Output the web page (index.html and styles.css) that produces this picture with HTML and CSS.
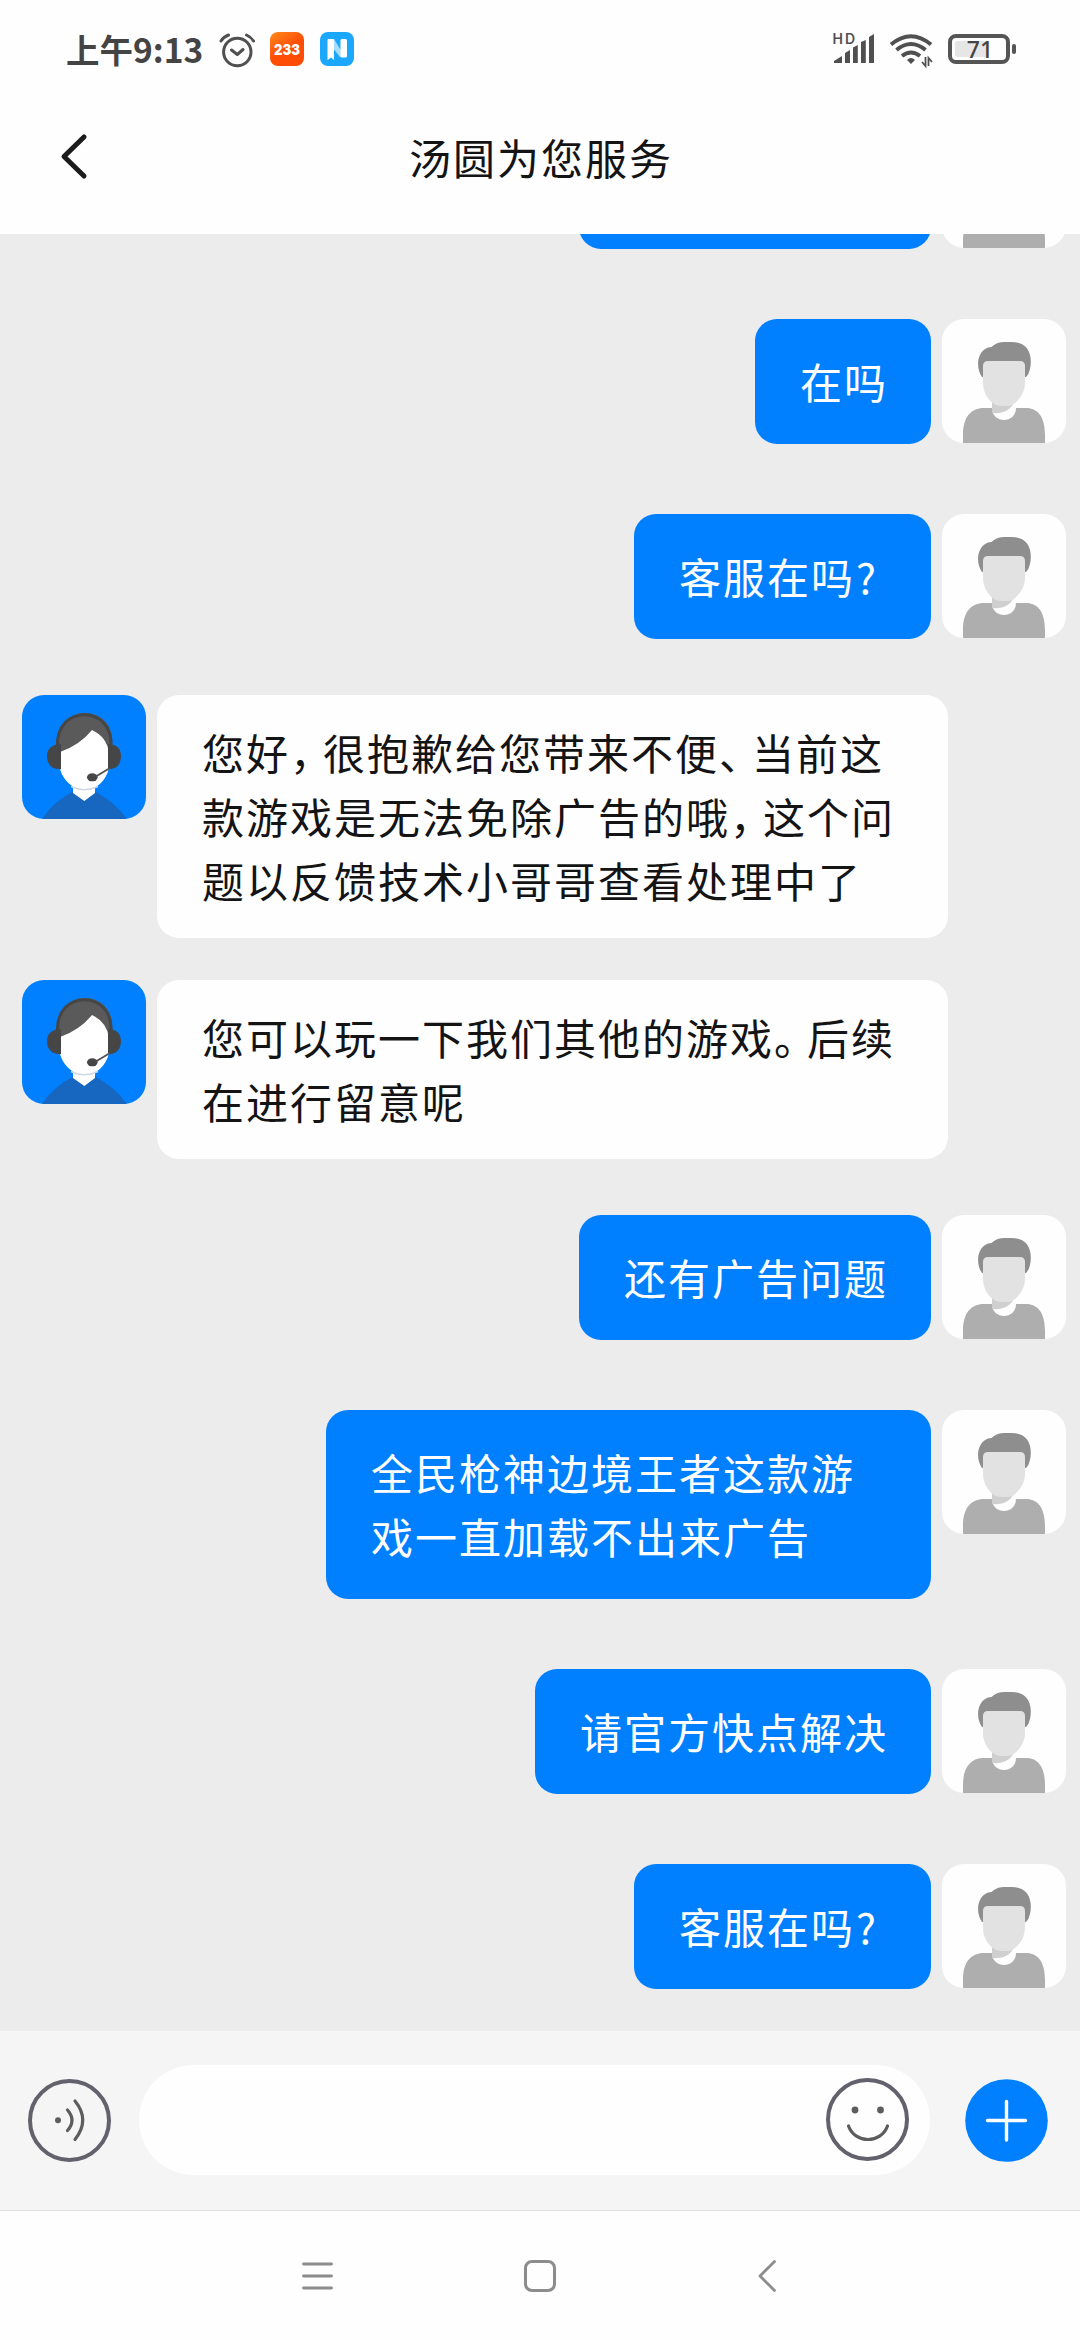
FILE: index.html
```html
<!DOCTYPE html>
<html lang="zh-CN">
<head>
<meta charset="utf-8">
<title>汤圆为您服务</title>
<link rel="stylesheet" href="styles.css">
</head>
<body>
<svg class="defs" width="0" height="0">
  <defs>
    <symbol id="user" viewBox="0 0 124 124">
      <rect width="124" height="124" fill="#fefefe"/>
      <path d="M40 58C34 50 34 33 46 28.500Q50 28.500 52 26Q56 23 62 23H70C86 23 91 36 88 50Q87 55 84 58Z" fill="#8e8e8e"/>
      <path d="M21 124V116C21 98 29 89 42 89H50C50 105 74 105 74 89H84C96 89 103 98 103 116V124Z" fill="#aeaeae"/>
      <path d="M50 83H72C69 91 61 95 50 94Z" fill="#cfcfcf"/>
      <path d="M41 47Q41 42 46 42H78Q83 42 83 47V64C83 76 73 87 65 87H59C50 87 41 76 41 64Z" fill="#e2e2e2"/>
    </symbol>
    <symbol id="agent" viewBox="0 0 124 124">
      <rect width="124" height="124" fill="#0080ff"/>
      <path d="M20 124Q30 108 50 97H74Q94 108 105 124Z" fill="#1767c0"/>
      <path d="M51 88H73V98L62.300 106L51 98Z" fill="#fff"/>
      <path d="M35 60V45C36 10 89 8 90 45V60Z" fill="#5a5a5a"/>
      <path d="M38 57Q58 50 70 35Q85 42 87 58V73C84 86 74 95 62.500 95C50 95 39 82 38 73Z" fill="#fff"/>
      <path d="M49 91.500Q62 98 76 91.500" fill="none" stroke="#d3dae3" stroke-width="1.500"/>
      <path d="M35.500 52C33 9 92 9 89 52" fill="none" stroke="#464646" stroke-width="3"/>
      <path d="M39 49V74C30 75 25 69 25 61S31 49 39 49ZM86 49V74C94 75 99 69 99 61S94 49 86 49Z" fill="#464646"/>
      <path d="M88 73L73 82" stroke="#555" stroke-width="2" fill="none"/>
      <ellipse cx="70.300" cy="82.300" rx="5.300" ry="4" fill="#464646"/>
    </symbol>
  </defs>
</svg>
<div class="screen">
  <header class="status">
    <span class="time">上午9:13</span>
    <svg class="alarm" width="36" height="36" viewBox="219 32 36 36" fill="none" stroke="#505050" stroke-width="3" stroke-linecap="round" stroke-linejoin="round">
      <circle cx="237.300" cy="52" r="13.700"/><path d="M231.500 50L237.300 54.500L243 49.500M221 41Q223.500 37 228.500 35M246.500 35Q251 37 253.500 41"/>
    </svg>
    <svg class="app" width="34" height="34" viewBox="0 0 34 34">
      <defs><linearGradient id="orange" x1="0" y1="0" x2=".6" y2="1"><stop stop-color="#ff8a1c"/><stop offset=".6" stop-color="#ff4d05"/></linearGradient></defs>
      <rect width="34" height="34" rx="8" fill="url(#orange)"/>
      <text class="app-text" x="17" y="22.500" text-anchor="middle" textLength="26" lengthAdjust="spacingAndGlyphs">233</text>
    </svg>
    <svg class="app" width="34" height="34" viewBox="0 0 34 34">
      <rect width="34" height="34" rx="8" fill="#1ba7fb"/>
      <path d="M9 7H14L25 25H20L12 15Z" fill="#a5dcff"/>
      <path d="M8 7H14V28L11 25.500L7.500 28V8Z" fill="#fff"/><rect x="20.500" y="7" width="6.500" height="18.500" rx="1.500" fill="#fff"/>
    </svg>
    <div class="indicators">
      <svg width="44" height="40" viewBox="832 29 44 40" fill="#505050">
        <text class="hd" x="832.500" y="44" textLength="22.500">HD</text>
        <path d="M834 63V61L842 56V63ZM845 63V53L850 50V63ZM853 63V47.500L857.800 45V63ZM861 63V42L865.800 40V63ZM869 63V37L874 34V63Z"/>
      </svg>
      <svg class="wifi" width="44" height="36" viewBox="889 32 44 36" fill="none" stroke="#505050" stroke-width="4">
        <path d="M891 44.500Q911 28 931 44.500M896.500 50Q911 38 925.500 50M902 56Q911 49 920 56"/>
        <path d="M911 64L907 60Q911 56 915 60Z" fill="#505050" stroke="none"/>
        <path d="M925.500 57V66L922 62M928.500 66V58L932 62" stroke-width="1.800"/>
      </svg>
      <svg class="battery" width="70" height="32" viewBox="947 33 70 32">
        <rect x="955" y="41" width="34" height="16" rx="2" fill="#e6e6e6"/>
        <rect x="950" y="36" width="58" height="26" rx="6" fill="none" stroke="#555" stroke-width="4"/>
        <rect x="1012" y="44" width="4" height="10" rx="2" fill="#555"/>
        <text class="level" x="980" y="58" text-anchor="middle">71</text>
      </svg>
    </div>
  </header>
  <div class="titlebar">
    <svg class="back" width="30" height="50" viewBox="0 0 30 50" fill="none" stroke="#1b1b1b" stroke-width="5" stroke-linecap="round" stroke-linejoin="round"><path d="M24 5L4 24.500L24 44"/></svg>
    <h1 class="title">汤圆为您服务</h1>
  </div>
  <main class="chat">
    <div class="msg me"><div class="bubble cut"></div><svg class="avatar"><use href="#user"/></svg></div>
    <div class="msg me"><div class="bubble">在吗</div><svg class="avatar"><use href="#user"/></svg></div>
    <div class="msg me"><div class="bubble">客服在吗<span class="q">?</span></div><svg class="avatar"><use href="#user"/></svg></div>
    <div class="msg"><svg class="avatar"><use href="#agent"/></svg><div class="bubble">您好<span class="p">，</span>很抱歉给您带来不便<span class="p">、</span>当前这<br>款游戏是无法免除广告的哦<span class="p">，</span>这个问<br>题以反馈技术小哥哥查看处理中了</div></div>
    <div class="msg"><svg class="avatar"><use href="#agent"/></svg><div class="bubble">您可以玩一下我们其他的游戏<span class="p">。</span>后续<br>在进行留意呢</div></div>
    <div class="msg me"><div class="bubble">还有广告问题</div><svg class="avatar"><use href="#user"/></svg></div>
    <div class="msg me"><div class="bubble long">全民枪神边境王者这款游<br>戏一直加载不出来广告</div><svg class="avatar"><use href="#user"/></svg></div>
    <div class="msg me"><div class="bubble">请官方快点解决</div><svg class="avatar"><use href="#user"/></svg></div>
    <div class="msg me"><div class="bubble">客服在吗<span class="q">?</span></div><svg class="avatar"><use href="#user"/></svg></div>
  </main>
  <footer class="composer">
    <svg class="round" viewBox="0 0 83 83" fill="none" stroke="#62616c" stroke-width="4">
      <circle cx="41.500" cy="41.500" r="39.500"/><circle cx="30" cy="41.200" r="3" fill="#5d5d5d" stroke="none"/>
      <path d="M39.500 31Q48.500 41.500 39.500 51.500M47 22Q62.500 41 47 60.500" stroke="#5d5d5d" stroke-width="3.200" stroke-linecap="round"/>
    </svg>
    <div class="field">
      <svg class="round" viewBox="0 0 83 83" fill="none" stroke="#62616c" stroke-width="4">
        <circle cx="41.500" cy="41.500" r="39.500"/><circle cx="29" cy="32" r="3.400" fill="#5d5d5d" stroke="none"/><circle cx="54.500" cy="32" r="3.400" fill="#5d5d5d" stroke="none"/>
        <path d="M22.500 48C29 66 55 66 61.500 48" stroke="#5d5d5d" stroke-width="3.200" stroke-linecap="round"/>
      </svg>
    </div>
    <svg class="round plus" viewBox="0 0 83 83"><circle cx="41.500" cy="41.500" r="41.300" fill="#0080ff"/><path d="M41.500 22.500V61M22.500 41.500H60.500" stroke="#fff" stroke-width="3.400" stroke-linecap="round"/></svg>
  </footer>
  <nav class="nav">
    <svg width="32" height="32" viewBox="0 0 32 32" fill="none" stroke="#8c8c8c" stroke-width="2.800" stroke-linecap="round"><path d="M2.500 4H30.500M2.500 16H30.500M2.500 28H30.500"/></svg>
    <svg width="32" height="32" viewBox="0 0 32 32" fill="none" stroke="#8c8c8c" stroke-width="3"><rect x="1.500" y="1.500" width="29" height="29" rx="6.500"/></svg>
    <svg width="32" height="32" viewBox="0 0 32 32" fill="none" stroke="#8c8c8c" stroke-width="2.800" stroke-linecap="round" stroke-linejoin="round"><path d="M27.500 1.500L13 16L27.500 30.500"/></svg>
  </nav>
</div>
</body>
</html>
```
FILE: styles.css
```css
* { box-sizing: border-box; }
body { margin: 0; font-family: "Noto Sans CJK SC", sans-serif; }
svg { display: block; flex: none; }
.defs { position: absolute; }
.screen { width: 1080px; height: 2340px; display: flex; flex-direction: column; overflow: hidden; background: #fefefe; }

.status { height: 98px; padding: 0 63px 0 66px; display: flex; align-items: center; }
.time { width: 153px; font-size: 33.500px; line-height: 48px; font-weight: 700; color: #444; white-space: nowrap; }
.alarm { margin-top: 2px; margin-right: 15px; }
.app { margin-right: 16px; }
.app-text { font: 900 15px Inter, sans-serif; fill: #fff; }
.indicators { margin-left: auto; display: flex; align-items: center; }
.wifi { margin: 2px 14px 0 13px; }
.hd { font: 600 14px Inter, sans-serif; }
.level { font: 500 23px "Noto Sans", sans-serif; fill: #444; }

.titlebar { height: 136px; display: flex; align-items: center; padding: 0 60px 18px; }
.back { margin-right: -30px; }
.title { flex: 1; margin: 0; padding-left: 2px; text-align: center; font-size: 42px; line-height: 64px; font-weight: 400; letter-spacing: 2px; color: #141414; }

.chat { height: 1797px; flex: none; background: #ececec; overflow: hidden; display: flex; flex-direction: column; padding: 0 14px 0 22px; }
.msg { display: flex; gap: 11px; align-items: flex-start; margin: 21px 0; }
.me { justify-content: flex-end; margin: 35px 0; }
.avatar { width: 124px; height: 124px; border-radius: 22px; overflow: hidden; }
.bubble { width: 791px; padding: 25px 43px 26px 45px; border-radius: 22px; background: #fefefe; color: #141414; font-size: 42px; line-height: 64px; letter-spacing: 2px; white-space: nowrap; }
.me .bubble { width: auto; padding: 30px 43px 31px 45px; background: #0080ff; color: #fff; }
.me .long { width: 605px; }
.me .cut { width: 352px; height: 125px; }
.msg:first-child { margin-top: -110px; }
.p { letter-spacing: -9px; }
.q { display: inline-block; width: 33px; padding-left: 1px; }

.composer { height: 180px; flex: none; display: flex; align-items: center; padding: 0 32px 1px 28px; background: #f5f5f5; border-bottom: 1px solid #dedede; }
.round { width: 83px; height: 83px; }
.field { width: 791px; height: 110px; margin: 0 35px 0 28px; padding: 0 21px 1px; border-radius: 55px; background: #fefefe; display: flex; align-items: center; justify-content: flex-end; }

.nav { height: 129px; display: flex; align-items: center; gap: 191px; padding-left: 301px; }
```
